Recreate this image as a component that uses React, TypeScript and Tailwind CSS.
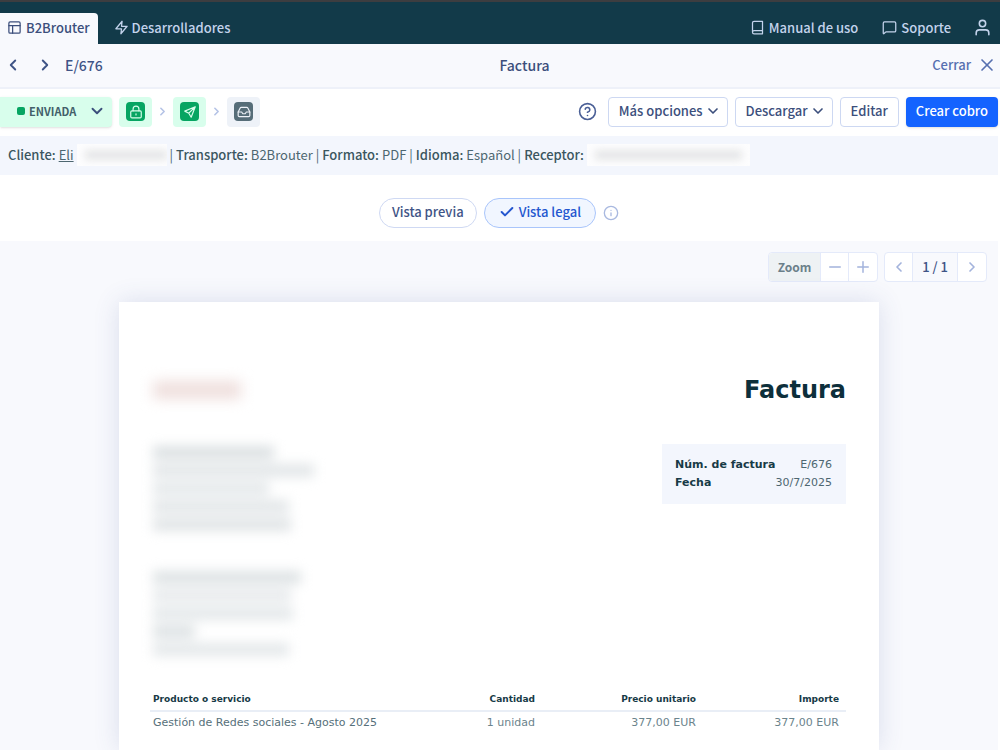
import type { ReactNode } from "react";
import {
  Check,
  ChevronDown,
  ChevronLeft,
  ChevronRight,
  CircleHelp,
  Inbox,
  Info,
  MessageSquare,
  Minus,
  Plus,
  X,
} from "lucide-react";

const stroke = {
  fill: "none",
  stroke: "currentColor",
  strokeWidth: 2,
  strokeLinecap: "round" as const,
  strokeLinejoin: "round" as const,
};

function LayoutIcon() {
  return (
    <svg viewBox="0 0 24 24" className="size-[15px]" {...stroke}>
      <rect x="3" y="3" width="18" height="18" rx="2" />
      <path d="M3 9h18M9 21V9" />
    </svg>
  );
}

function BoltIcon() {
  return (
    <svg viewBox="0 0 24 24" className="size-[15px]" {...stroke}>
      <path d="M13 2 3 14h9l-1 8 10-12h-9l1-8z" />
    </svg>
  );
}

function BookIcon() {
  return (
    <svg viewBox="0 0 24 24" className="size-[15px]" {...stroke}>
      <path d="M4 19.500A2.500 2.500 0 0 1 6.500 17H20M6.500 2H20v20H6.500A2.500 2.500 0 0 1 4 19.500v-15A2.500 2.500 0 0 1 6.500 2z" />
    </svg>
  );
}

function UserIcon() {
  return (
    <svg viewBox="0 0 24 24" className="size-[19px]" {...stroke}>
      <path d="M20 21v-2a4 4 0 0 0-4-4H8a4 4 0 0 0-4 4v2" />
      <circle cx="12" cy="7" r="4" />
    </svg>
  );
}

function PlaneIcon() {
  return (
    <svg viewBox="0 0 24 24" className="size-[14px]" {...stroke}>
      <path d="M21 3 3 10.500l7 3.500 4 7L21 3zM10 14 21 3" />
    </svg>
  );
}

function LockIcon() {
  return (
    <svg viewBox="0 0 24 24" className="size-[14px]" {...stroke}>
      <rect x="3" y="10" width="18" height="12" rx="2" />
      <path d="M7 10V7a5 5 0 0 1 10 0v3M12 15v2" />
    </svg>
  );
}

function TopBar() {
  return (
    <header className="flex h-11 items-end border-t-2 border-[#3d3d40] bg-[#123a49] pr-2 text-[#c3d3ec]">
      <nav className="flex items-end">
        <a
          href="#b2brouter"
          className="flex h-[31px] items-center gap-1 rounded-tr bg-[#f8f9fd] pr-2 pb-0.5 pl-[7px] text-[#3c4f7c]"
        >
          <LayoutIcon />
          B2Brouter
        </a>
        <a href="#desarrolladores" className="flex h-[31px] items-center gap-[3px] pb-0.5 pl-4">
          <BoltIcon />
          Desarrolladores
        </a>
      </nav>
      <div className="ml-auto flex h-[31px] items-center pb-0.5">
        <a href="#manual" className="flex items-center gap-1">
          <BookIcon />
          Manual de uso
        </a>
        <a href="#soporte" className="ml-6 flex items-center gap-1">
          <MessageSquare className="size-[15px]" />
          Soporte
        </a>
        <button type="button" aria-label="Cuenta" className="ml-[22px]">
          <UserIcon />
        </button>
      </div>
    </header>
  );
}

function TitleBar() {
  return (
    <div className="grid h-[45px] grid-cols-3 items-center border-b-2 border-[#eef1f9] bg-[#f8f9fd] pr-[3px] pb-0.5 pl-1 text-[#3f5486]">
      <div className="flex items-center">
        <button type="button" aria-label="Anterior">
          <ChevronLeft className="size-[18px]" strokeWidth={2.5} />
        </button>
        <button type="button" aria-label="Siguiente" className="ml-3.5">
          <ChevronRight className="size-[18px]" strokeWidth={2.5} />
        </button>
        <span className="ml-[11px] text-[14px]">E/676</span>
      </div>
      <h1 className="pl-12 text-center text-[14px] text-[#3c4f7c]">Factura</h1>
      <a href="#cerrar" className="flex items-center justify-end gap-1.5 text-[#5770b0]">
        Cerrar
        <X className="size-5" />
      </a>
    </div>
  );
}

function Step({ done, children }: { done: boolean; children: ReactNode }) {
  return (
    <span
      className={
        done
          ? "flex h-[30px] w-[33px] items-center justify-center rounded bg-[#d8feec]"
          : "flex h-[30px] w-[33px] items-center justify-center rounded bg-[#eef2f8]"
      }
    >
      <span
        className={
          done
            ? "flex size-[19px] items-center justify-center rounded bg-[#06a562] text-[#d8feec]"
            : "flex size-[19px] items-center justify-center rounded bg-[#566d78] text-[#eef2f8]"
        }
      >
        {children}
      </span>
    </span>
  );
}

function OutlineButton({ menu = false, children }: { menu?: boolean; children: ReactNode }) {
  return (
    <button
      type="button"
      className="flex h-[30px] items-center gap-0.5 rounded border border-[#cdd8f2] bg-white px-2.5 pb-0.5 text-[#3c4f7c]"
    >
      {children}
      {menu && <ChevronDown className="-mr-1 size-4" strokeWidth={2.5} />}
    </button>
  );
}

function Actions() {
  return (
    <div className="flex h-[47px] items-center pb-0.5">
      <button
        type="button"
        className="flex h-[30px] w-28 items-center rounded-r bg-[#d8feec] pb-0.5 pl-[17px] text-[11px] font-bold text-[#43606a] shadow-sm"
      >
        <span className="mr-1 size-2 rounded-xs bg-[#06a562]" />
        ENVIADA
        <ChevronDown className="mr-1.5 ml-auto size-[18px] text-[#3c4f7c]" strokeWidth={2.5} />
      </button>
      <div className="ml-[7px] flex items-center gap-1 text-[#b5c3e6]">
        <Step done>
          <LockIcon />
        </Step>
        <ChevronRight className="size-[13px]" strokeWidth={3} />
        <Step done>
          <PlaneIcon />
        </Step>
        <ChevronRight className="size-[13px]" strokeWidth={3} />
        <Step done={false}>
          <Inbox className="size-[14px]" />
        </Step>
      </div>
      <div className="ml-auto flex items-center gap-[7px]">
        <button type="button" aria-label="Ayuda" className="mr-1 text-[#4a5f96]">
          <CircleHelp className="size-[19px]" />
        </button>
        <OutlineButton menu>Más opciones</OutlineButton>
        <OutlineButton menu>Descargar</OutlineButton>
        <OutlineButton>Editar</OutlineButton>
        <button
          type="button"
          className="h-[30px] rounded bg-[#1463ff] px-2.5 pb-0.5 text-white shadow-sm"
        >
          Crear cobro
        </button>
      </div>
    </div>
  );
}

function Label({ children }: { children: ReactNode }) {
  return <span className="font-medium text-[#3b5660]">{children}</span>;
}

function InfoBar() {
  return (
    <div className="flex h-[39px] items-center gap-[3px] bg-[#f3f6fd] pb-0.5 pl-2 font-normal whitespace-nowrap text-[#4d6670]">
      <Label>Cliente:</Label>
      <a href="#cliente" className="underline">
        Eli
      </a>
      <span className="flex h-[22px] w-[90px] items-center overflow-hidden bg-[#fdfdfe] pl-2">
        <span className="h-2 w-full bg-[#e0e1e2] blur-xs" />
      </span>
      <span>|</span>
      <Label>Transporte:</Label>
      <span>B2Brouter |</span>
      <Label>Formato:</Label>
      <span>PDF |</span>
      <Label>Idioma:</Label>
      <span>Español |</span>
      <Label>Receptor:</Label>
      <span className="flex h-[22px] w-[163px] items-center overflow-hidden bg-[#fdfdfe] px-2">
        <span className="h-2 w-full bg-[#e0e1e2] blur-xs" />
      </span>
    </div>
  );
}

function ViewSwitch() {
  return (
    <div className="flex h-[66px] items-center justify-center gap-[7px] pt-2.5">
      <button
        type="button"
        className="h-[30px] rounded-full border border-[#cfd9f3] bg-white px-3 pb-0.5 text-[#3f5486]"
      >
        Vista previa
      </button>
      <button
        type="button"
        className="flex h-[30px] items-center gap-1 rounded-full border border-[#a9c5fb] bg-[#f1f6ff] px-3.5 pb-0.5 text-[#2456cf]"
      >
        <Check className="size-4" strokeWidth={3} />
        Vista legal
      </button>
      <button type="button" aria-label="Información" className="text-[#a9b9e0]">
        <Info className="size-4" />
      </button>
    </div>
  );
}

function ViewerTools() {
  return (
    <div className="flex justify-end gap-1.5 pr-[11px] text-[#a3b3dc]">
      <div className="flex h-[30px] items-stretch divide-x divide-[#e4eafa] rounded border border-[#e4eafa] bg-white">
        <span className="flex w-[52px] items-center justify-center rounded-l bg-[#eef2f4] text-[12px] font-bold text-[#6b808a]">
          Zoom
        </span>
        <button type="button" aria-label="Alejar" className="flex w-7 items-center justify-center">
          <Minus className="size-[18px]" />
        </button>
        <button type="button" aria-label="Acercar" className="flex w-7 items-center justify-center">
          <Plus className="size-[18px]" />
        </button>
      </div>
      <div className="flex h-[30px] items-stretch divide-x divide-[#e4eafa] rounded border border-[#e4eafa] bg-white">
        <button type="button" aria-label="Página anterior" className="flex w-7 items-center justify-center">
          <ChevronLeft className="size-4" strokeWidth={2.5} />
        </button>
        <span className="flex w-[45px] items-center justify-center bg-[#f8f9fd] text-[#3f5486]">1 / 1</span>
        <button type="button" aria-label="Página siguiente" className="flex w-7 items-center justify-center">
          <ChevronRight className="size-4" strokeWidth={2.5} />
        </button>
      </div>
    </div>
  );
}

function Invoice() {
  return (
    <article className="mx-auto mt-5 flex w-full max-w-[760px] flex-1 flex-col bg-white pt-[72px] pr-[33px] pl-[31px] font-['DejaVu_Sans',sans-serif] text-[11px] font-normal shadow-[0_0_24px_rgba(60,80,150,0.16)]">
      <div className="flex h-8 items-center justify-between pl-[3px]">
        <span className="h-[18px] w-[88px] bg-[#efdfdd] blur-[7px]" />
        <h2 className="text-[24px] font-bold text-[#0d2f3b]">Factura</h2>
      </div>
      <div className="mt-[38px] flex items-start justify-between pl-[3px]">
        <div>
          <div className="flex flex-col gap-[5px] pt-0.5 blur-[6px]">
            <span className="h-[13px] w-[121px] bg-[#dbe0e2]" />
            <span className="h-[13px] w-[161px] bg-[#e2e6e8]" />
            <span className="h-[13px] w-[116px] bg-[#e4e8ea]" />
            <span className="h-[13px] w-[136px] bg-[#e2e6e8]" />
            <span className="h-[13px] w-[138px] bg-[#e0e4e6]" />
          </div>
          <div className="mt-10 flex flex-col gap-[5px] blur-[6px]">
            <span className="h-[13px] w-[148px] bg-[#dde2e4]" />
            <span className="h-[13px] w-[138px] bg-[#e7eaec]" />
            <span className="h-[13px] w-[140px] bg-[#e4e8ea]" />
            <span className="h-[13px] w-[42px] bg-[#dde2e4]" />
            <span className="h-[13px] w-[136px] bg-[#e4e8ea]" />
          </div>
        </div>
        <dl className="grid h-[60px] w-[184px] grid-cols-[auto_auto] content-center justify-between bg-[#f3f6fd] pr-3.5 pl-[13px] leading-[18px] whitespace-nowrap text-[#4d6670]">
          <dt className="font-bold text-[#173a46]">Núm. de factura</dt>
          <dd className="text-right">E/676</dd>
          <dt className="font-bold text-[#173a46]">Fecha</dt>
          <dd className="text-right">30/7/2025</dd>
        </dl>
      </div>
      <table className="mt-[31px] w-full table-fixed text-right text-[#6b838c]">
        <thead className="border-b-2 border-[#e9eef6] text-[9px] text-[#173a46]">
          <tr className="h-6">
            <th className="pl-[3px] text-left">Producto o servicio</th>
            <th className="w-[112px] pr-[7px]">Cantidad</th>
            <th className="w-[161px] pr-[7px]">Precio unitario</th>
            <th className="w-[143px] pr-[7px]">Importe</th>
          </tr>
        </thead>
        <tbody>
          <tr className="h-[22px]">
            <td className="pl-[3px] text-left text-[#56707a]">Gestión de Redes sociales - Agosto 2025</td>
            <td className="pr-[7px]">1 unidad</td>
            <td className="pr-[7px]">377,00 EUR</td>
            <td className="pr-[7px]">377,00 EUR</td>
          </tr>
        </tbody>
      </table>
    </article>
  );
}

export default function App() {
  return (
    <div className="flex min-h-screen flex-col bg-white font-['Noto_Sans_CJK_SC',sans-serif] text-[13px] leading-5 font-medium">
      <TopBar />
      <TitleBar />
      <main className="flex flex-1 flex-col pr-0.5">
        <Actions />
        <InfoBar />
        <ViewSwitch />
        <section className="flex flex-1 flex-col overflow-hidden bg-[#f8f9fd] pt-[11px]">
          <ViewerTools />
          <Invoice />
        </section>
      </main>
    </div>
  );
}
